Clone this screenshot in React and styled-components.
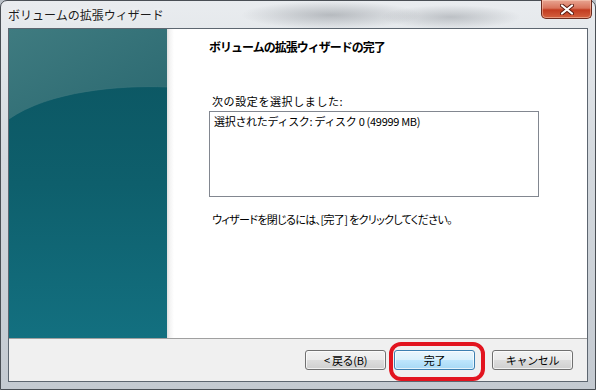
import styled, { createGlobalStyle } from 'styled-components';

const GlobalStyle = createGlobalStyle`
  html, body {
    margin: 0;
    padding: 0;
    background: #b9c0c7;
  }
  * {
    box-sizing: border-box;
  }
`;

const Window = styled.div`
  display: flex;
  flex-direction: column;
  width: 596px;
  height: 390px;
  padding: 0 7px 7px 7px;
  border: 1px solid #4a4f55;
  border-radius: 7px 7px 0 0;
  background:
    radial-gradient(ellipse 90px 14px at 330px 14px, rgba(90, 96, 104, 0.35), transparent),
    radial-gradient(ellipse 70px 12px at 450px 16px, rgba(90, 96, 104, 0.3), transparent),
    linear-gradient(to bottom, #e9ecef 0%, #d4d9de 40%, #c4cad1 100%);
  font-family: 'Noto Sans CJK JP', 'Noto Sans', sans-serif;
`;

const TitleBar = styled.div`
  display: flex;
  align-items: flex-start;
  justify-content: space-between;
  height: 29px;
`;

const Title = styled.div`
  margin-top: 6px;
  font-size: 12px;
  line-height: 16px;
  color: #1b1b1b;
  text-shadow: 0 0 6px rgba(255, 255, 255, 0.9);
`;

const CloseButton = styled.button`
  display: flex;
  align-items: center;
  justify-content: center;
  width: 51px;
  height: 19px;
  margin: -1px -4px 0 0;
  padding: 0;
  border: 1px solid #6d2b1e;
  border-top: none;
  border-radius: 0 0 5px 5px;
  background: linear-gradient(
    to bottom,
    #e8a592 0%,
    #d9745c 45%,
    #c23c20 55%,
    #d4613f 100%
  );
  box-shadow: inset 0 0 0 1px rgba(255, 220, 200, 0.45);
`;

const Client = styled.div`
  display: flex;
  flex-direction: column;
  flex: 1;
  border: 1px solid #5d6670;
  background: #ffffff;
`;

const Body = styled.div`
  display: flex;
  height: 309px;
`;

const SidePanel = styled.div`
  width: 158px;
  flex-shrink: 0;
  background: linear-gradient(to bottom, #0b5460 0%, #0e5f6c 50%, #137080 100%);
`;

const Art = styled.svg`
  display: block;
  width: 100%;
  height: 100%;
`;

const Content = styled.div`
  flex: 1;
  padding: 10px 0 0 42px;
  background: linear-gradient(to right, #dedede 0px, #f4f4f4 3px, #ffffff 7px);
  color: #000000;
  font-size: 11px;
`;

const Heading = styled.h1`
  margin: 0 0 39px;
  font-size: 12px;
  line-height: 16px;
  font-weight: bold;
  letter-spacing: -1px;
`;

const Label = styled.p`
  margin: 0 0 2px 3px;
  font-size: 11px;
  line-height: 15px;
  letter-spacing: ${({ $spacing = 0 }) => $spacing}px;
  font-feature-settings: ${({ $palt }) => ($palt ? "'palt'" : 'normal')};
`;

const SummaryBox = styled.div`
  width: 330px;
  height: 86px;
  padding: 2px 4px;
  border: 1px solid #828790;
  font-size: 11px;
  line-height: 15px;
  letter-spacing: -0.3px;
`;

const Hint = styled(Label)`
  margin-top: 15px;
`;

const Footer = styled.div`
  display: flex;
  align-items: center;
  justify-content: flex-end;
  height: 43px;
  padding: 0 14px 0 0;
  border-top: 1px solid #a0a0a0;
  background: #f0f0f0;
`;

const Button = styled.button`
  width: 81px;
  height: 20px;
  margin-left: ${({ $gap = 0 }) => $gap}px;
  padding: 0;
  border: 1px solid ${({ $default }) => ($default ? '#3c7fb1' : '#707070')};
  border-radius: 3px;
  background: ${({ $default }) =>
    $default
      ? 'linear-gradient(to bottom, #eaf6fd 0%, #d9f0fc 50%, #bee6fd 51%, #a7d9f5 100%)'
      : 'linear-gradient(to bottom, #f2f2f2 0%, #ebebeb 50%, #dddddd 51%, #cfcfcf 100%)'};
  box-shadow: inset 0 0 0 1px rgba(255, 255, 255, 0.7);
  font-family: 'Noto Sans CJK JP', 'Noto Sans', sans-serif;
  font-size: 11px;
  line-height: 16px;
  color: #000000;
  letter-spacing: -0.3px;
`;

const Highlight = styled.span`
  position: relative;
  display: inline-flex;
  margin-left: 8px;

  &::after {
    content: '';
    position: absolute;
    top: -8px;
    right: -10px;
    bottom: -11px;
    left: -5px;
    border: 4px solid #e2141f;
    border-radius: 12px;
    pointer-events: none;
  }
`;

const App = () => (
  <>
    <GlobalStyle />
    <Window>
      <TitleBar>
        <Title>ボリュームの拡張ウィザード</Title>
        <CloseButton aria-label="閉じる">
          <svg width="14" height="11" viewBox="0 0 14 11">
            <path
              d="M2 1.5 L12 9.5 M12 1.5 L2 9.5"
              stroke="#5a1a10"
              strokeWidth="4"
              strokeLinecap="round"
            />
            <path
              d="M2 1.5 L12 9.5 M12 1.5 L2 9.5"
              stroke="#ffffff"
              strokeWidth="2.2"
              strokeLinecap="round"
            />
          </svg>
        </CloseButton>
      </TitleBar>
      <Client>
        <Body>
          <SidePanel>
            <Art viewBox="0 0 158 309" preserveAspectRatio="none">
              <defs>
                <linearGradient id="sheen" x1="0" y1="0" x2="1" y2="1">
                  <stop offset="0" stopColor="#3f7b80" />
                  <stop offset="1" stopColor="#2a6870" />
                </linearGradient>
              </defs>
              <path d="M0 0 H158 V58 C110 56 40 62 0 90 Z" fill="url(#sheen)" />
              <path
                d="M0 90 C40 62 110 56 158 58"
                fill="none"
                stroke="#3c777d"
                strokeWidth="1"
                opacity="0.6"
              />
            </Art>
          </SidePanel>
          <Content>
            <Heading>ボリュームの拡張ウィザードの完了</Heading>
            <Label $spacing={0.6}>次の設定を選択しました:</Label>
            <SummaryBox>選択されたディスク: ディスク 0 (49999 MB)</SummaryBox>
            <Hint $palt $spacing={-0.65}>
              ウィザードを閉じるには、[完了] をクリックしてください。
            </Hint>
          </Content>
        </Body>
        <Footer>
          <Button>&lt; 戻る(B)</Button>
          <Highlight>
            <Button $default>完了</Button>
          </Highlight>
          <Button $gap={17}>キャンセル</Button>
        </Footer>
      </Client>
    </Window>
  </>
);

export default App;
